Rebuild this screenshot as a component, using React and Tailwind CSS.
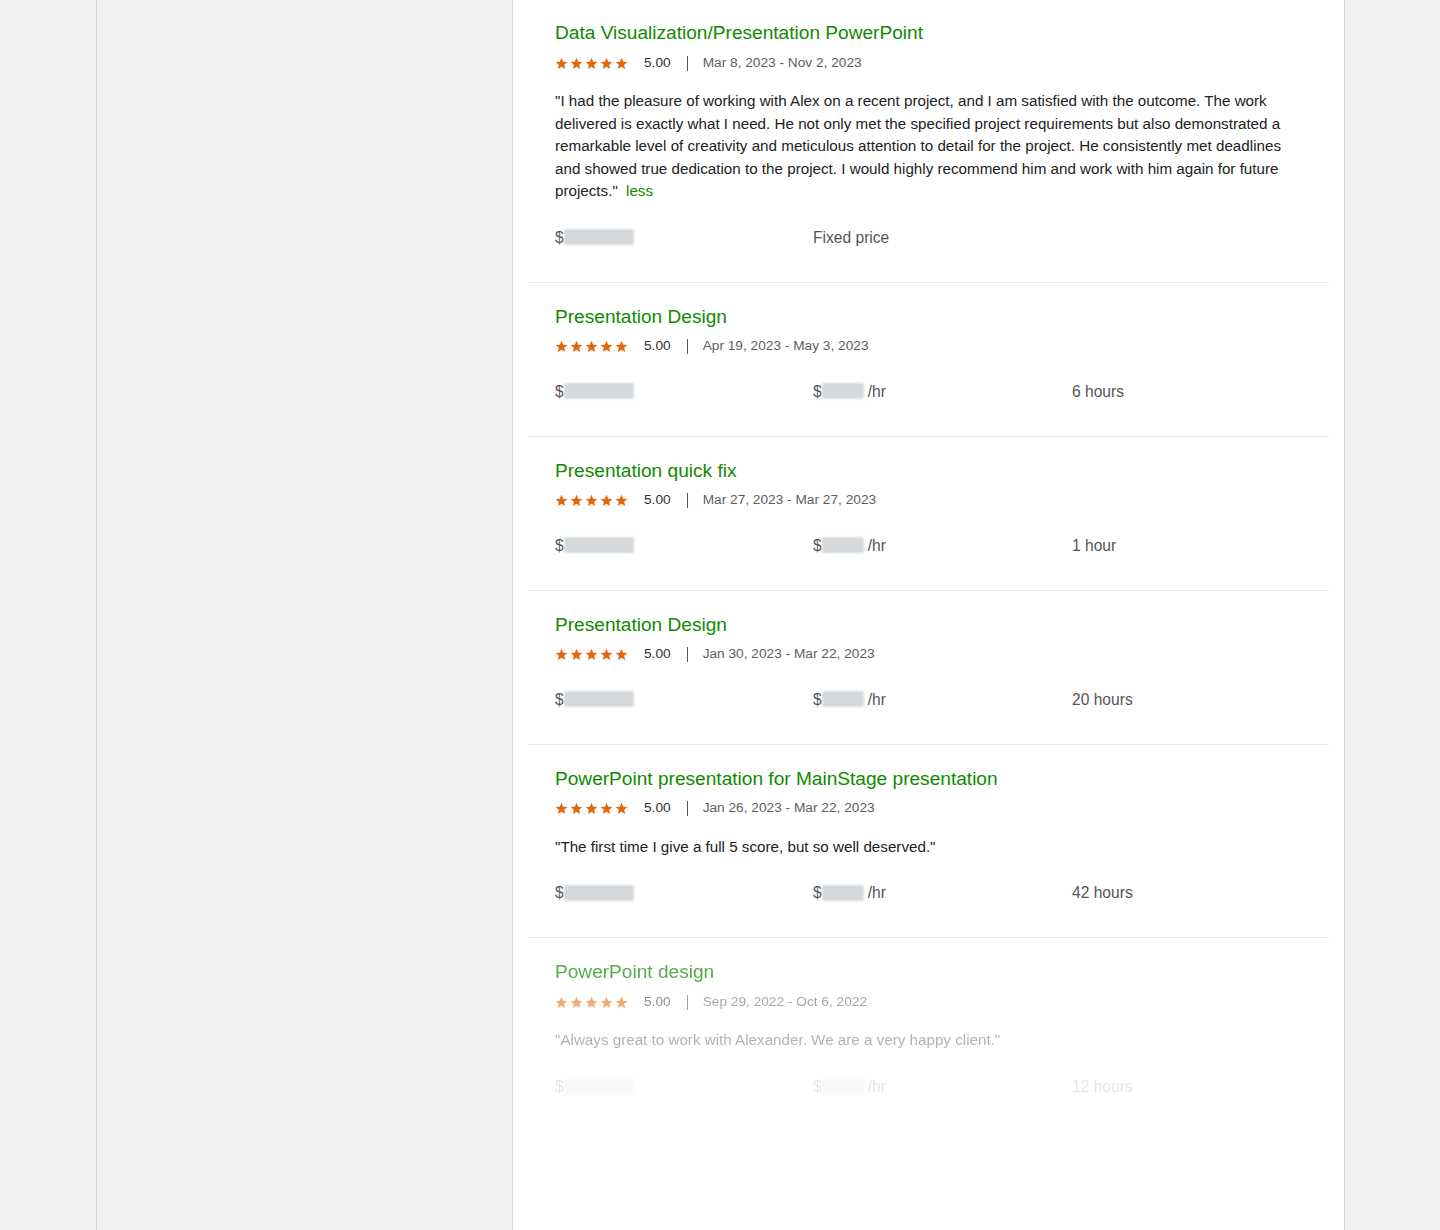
import React from 'react';

const FONT = { fontFamily: '"Liberation Sans", Arial, sans-serif' };

const jobs = [
  {
    title: 'Data Visualization/Presentation PowerPoint',
    dates: 'Mar 8, 2023 - Nov 2, 2023',
    quote:
      '"I had the pleasure of working with Alex on a recent project, and I am satisfied with the outcome. The work delivered is exactly what I need. He not only met the specified project requirements but also demonstrated a remarkable level of creativity and meticulous attention to detail for the project. He consistently met deadlines and showed true dedication to the project. I would highly recommend him and work with him again for future projects."',
    less: true,
    fixed: true,
  },
  { title: 'Presentation Design', dates: 'Apr 19, 2023 - May 3, 2023', hours: '6 hours' },
  { title: 'Presentation quick fix', dates: 'Mar 27, 2023 - Mar 27, 2023', hours: '1 hour' },
  { title: 'Presentation Design', dates: 'Jan 30, 2023 - Mar 22, 2023', hours: '20 hours' },
  {
    title: 'PowerPoint presentation for MainStage presentation',
    dates: 'Jan 26, 2023 - Mar 22, 2023',
    quote: '"The first time I give a full 5 score, but so well deserved."',
    hours: '42 hours',
  },
  {
    title: 'PowerPoint design',
    dates: 'Sep 29, 2022 - Oct 6, 2022',
    quote: '"Always great to work with Alexander. We are a very happy client."',
    hours: '12 hours',
    faded: true,
  },
];

function Star() {
  return (
    <svg width="13" height="13" viewBox="0 0 24 24" fill="#e2680d">
      <path d="M12 1.5l3.1 7.1 7.7.7-5.8 5.1 1.7 7.6L12 18l-6.7 4 1.7-7.6-5.8-5.1 7.7-.7z" />
    </svg>
  );
}

function Blur({ w }) {
  return <span className="inline-block h-[16px] rounded-[2px] bg-[#d6d9dc] blur-[1px] align-middle" style={{ width: w }} />;
}

function Job({ job, first }) {
  const f = job.faded;
  return (
    <div className={`px-[27px] ${first ? 'pt-[19px]' : 'pt-[20px] border-t border-[#ececec]'} pb-[34px]`}>
      <h3 className={`text-[19.1px] leading-[28px] text-[#108a00] ${f ? 'opacity-70' : ''}`}>{job.title}</h3>
      <div className={`mt-[5px] flex h-[22px] items-center text-[13.7px] ${f ? 'opacity-55' : ''}`}>
        <div className="flex gap-[2px]">
          {[0, 1, 2, 3, 4].map(i => <Star key={i} />)}
        </div>
        <span className="ml-[16px] text-[#333]">5.00</span>
        <span className="ml-[16px] mr-[15px] h-[15px] w-px bg-[#555]" />
        <span className="text-[#5e5e5e]">{job.dates}</span>
      </div>
      {job.quote && (
        <p className={`mt-[16px] text-[15.2px] leading-[22.5px] text-[#222] ${f ? 'opacity-35' : ''}`}>
          {job.quote}
          {job.less && (
            <>
              {' '}
              <a className="ml-[4px] text-[#108a00]">less</a>
            </>
          )}
        </p>
      )}
      <div
        className={`${job.quote ? 'mt-[23px]' : 'mt-[22px]'} grid h-[22px] grid-cols-[258px_259px_1fr] items-center text-[15.6px] text-[#555] ${f ? 'opacity-15' : ''}`}
      >
        <div className="flex items-center">
          $<Blur w={70} />
        </div>
        {job.fixed ? (
          <div>Fixed price</div>
        ) : (
          <div className="flex items-center">
            $<Blur w={42} />
            <span className="ml-[4px]">/hr</span>
          </div>
        )}
        <div>{job.hours || ''}</div>
      </div>
    </div>
  );
}

export default function App() {
  return (
    <div className="flex min-h-[1230px] w-full bg-[#f2f2f2]" style={FONT}>
      <div className="w-[97px] shrink-0 border-r border-[#d6d6d6]" />
      <div className="w-[416px] shrink-0 border-r border-[#d9d9d9] bg-[#f1f1f1]" />
      <main className="w-[832px] shrink-0 border-r border-[#d6d6d6] bg-white px-[15px]">
        {jobs.map((job, i) => (
          <Job key={i} job={job} first={i === 0} />
        ))}
      </main>
      <div className="flex-1" />
    </div>
  );
}
